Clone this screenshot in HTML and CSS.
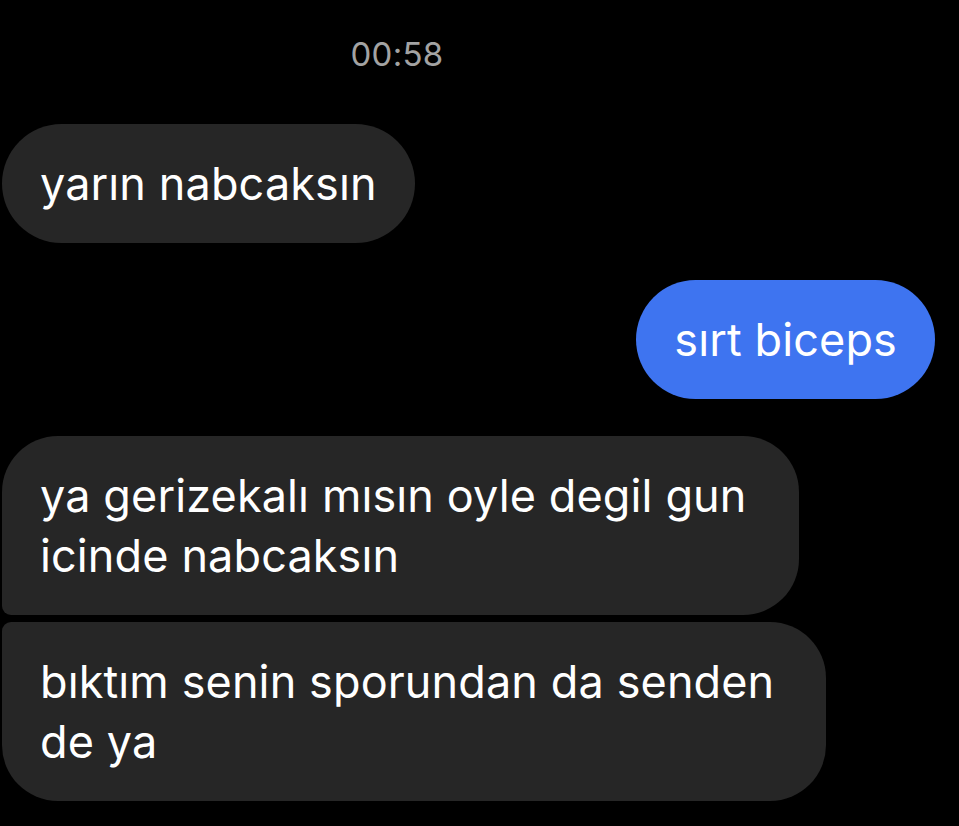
FILE: index.html
```html
<!DOCTYPE html>
<html lang="tr">
<head>
<meta charset="utf-8">
<title>Mesajlar</title>
<link rel="stylesheet" href="styles.css">
</head>
<body>
<main class="thread">
  <div class="stamp">00:58</div>

  <div class="row in">
    <div class="bubble grey">yarın nabcaksın</div>
  </div>

  <div class="row out">
    <div class="bubble blue">sırt biceps</div>
  </div>

  <div class="group">
    <div class="row in">
      <div class="bubble grey wide first">ya gerizekalı mısın oyle degil gun<br>icinde nabcaksın</div>
    </div>
    <div class="row in">
      <div class="bubble grey wide last">bıktım senin sporundan da senden<br>de ya</div>
    </div>
  </div>
</main>
</body>
</html>
```

FILE: styles.css
```css
html, body {
  margin: 0;
  padding: 0;
  background: #000;
}

body {
  width: 959px;
  height: 826px;
  overflow: hidden;
  font-family: Inter, "Noto Sans", "Liberation Sans", sans-serif;
  -webkit-font-smoothing: antialiased;
}

.thread {
  display: flex;
  flex-direction: column;
  gap: 37px;
  padding: 0 24px 0 2px;
}

.stamp {
  width: 790px;
  margin-top: 34px;
  margin-bottom: 13px;
  text-align: center;
  color: #a3a3a3;
  font-size: 33px;
  line-height: 40px;
  letter-spacing: 0.3px;
}

.row {
  display: flex;
}

.row.in {
  justify-content: flex-start;
}

.row.out {
  justify-content: flex-end;
}

.group {
  display: flex;
  flex-direction: column;
  gap: 7px;
}

.bubble {
  white-space: nowrap;
  color: #fff;
  font-size: 45px;
  line-height: 60px;
  letter-spacing: 0.12px;
  padding: 30px 38px 29px 38px;
  border-radius: 60px;
}

.bubble.grey {
  background: #262626;
}

.bubble.blue {
  background: #3e74f0;
}

/* multi-line bubbles keep a wider trailing inset */
.bubble.wide {
  padding-right: 52px;
}

.bubble.first {
  border-radius: 56px 56px 56px 9px;
}

.bubble.last {
  border-radius: 9px 56px 56px 56px;
}
```
